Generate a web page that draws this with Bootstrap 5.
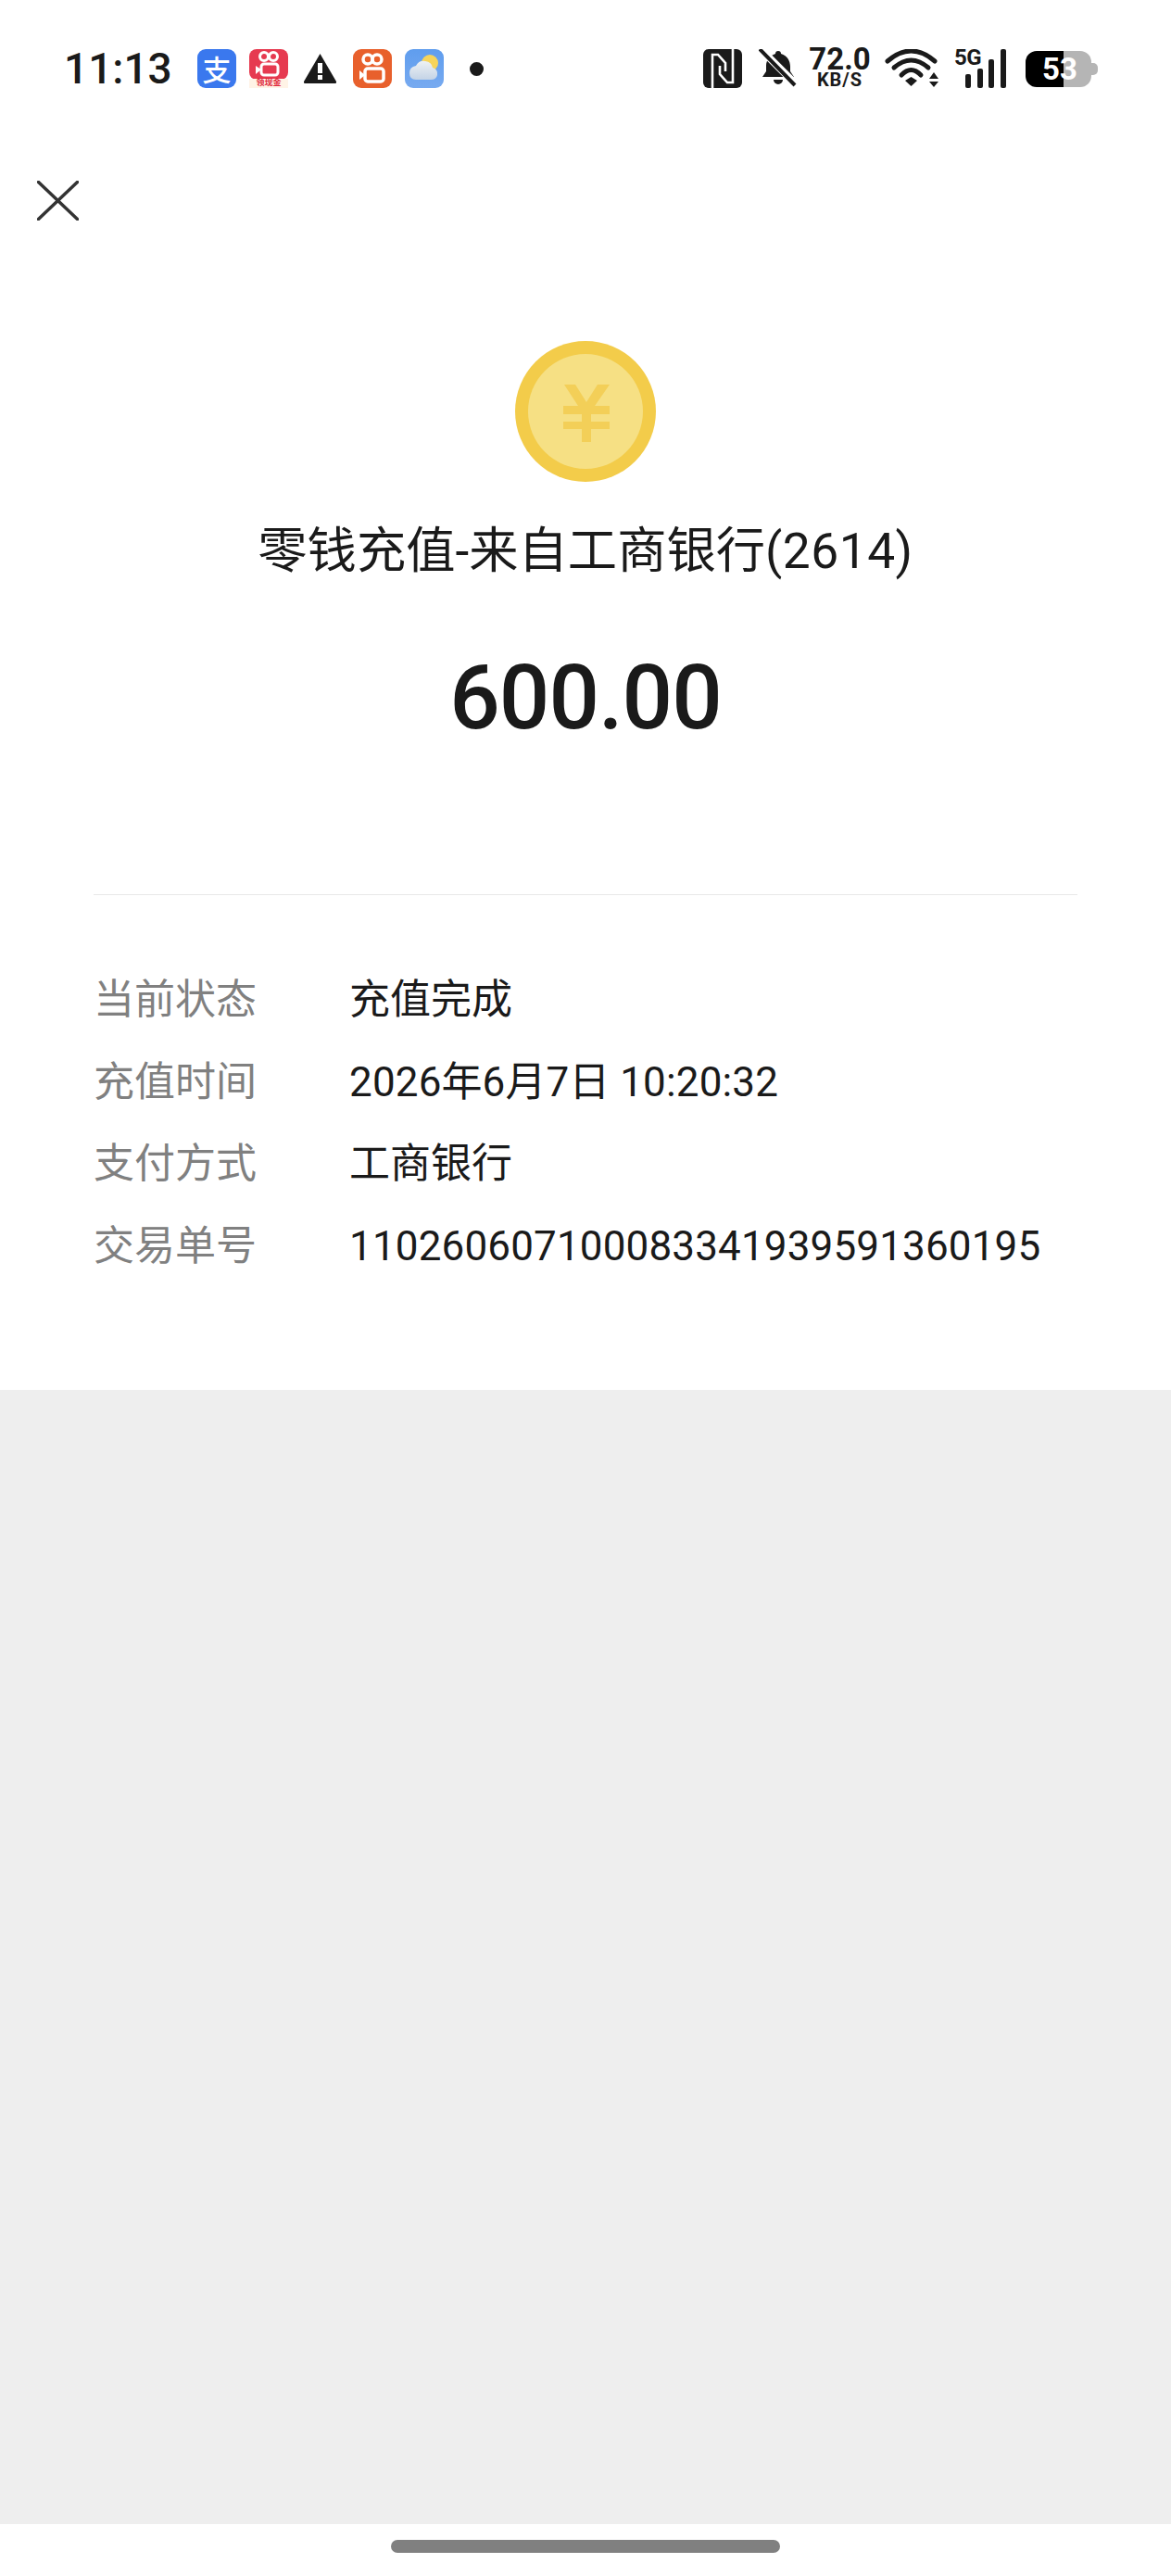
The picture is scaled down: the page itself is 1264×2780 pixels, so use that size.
<!DOCTYPE html>
<html lang="zh-CN">
  <head>
    <meta charset="UTF-8" />
    <meta name="viewport" content="width=device-width, initial-scale=1.0" />
    <title>零钱充值</title>
    <link href="https://cdn.jsdelivr.net/npm/bootstrap@5.3.0/dist/css/bootstrap.min.css" rel="stylesheet" />
    <style>
      body { background: #fff; color: #1a1a1a; font-family: Roboto, "Noto Sans CJK SC", sans-serif; }
      .page { height: 2780px; }
      .status-row { height: 148px; padding: 53px 79px 0 69px; }
      .status-row svg { display: block; flex: none; }
      .clock { width: 113px; margin-right: 31px; margin-top: -3px; font-size: 46px; font-weight: 500; line-height: 48px; white-space: nowrap; }
      .tray { gap: 14px; }
      .tray .warn { margin: 4px 3px 0 2px; }
      .tray .dot-mark { margin: 14px 0 0 14px; width: 15px; height: 15px; background: #1a1a1a; border-radius: 50%; }
      .pay-tile { width: 42px; height: 42px; border-radius: 9px; background: #3a78ee; color: #fff; font-family: "Noto Sans CJK SC", sans-serif; font-size: 31px; font-weight: 500; line-height: 42px; text-align: center; }
      .promo-tile { position: relative; width: 42px; height: 42px; }
      .promo-tag { position: absolute; left: 0; right: 0; bottom: 1px; color: #e0283c; font-family: "Noto Sans CJK SC", sans-serif; font-size: 9px; font-weight: 700; line-height: 10px; text-align: center; white-space: nowrap; }
      .nfc-mark { margin-right: 18px; }
      .speed { width: 67px; margin: -1px 15px 0 12px; text-align: center; font-weight: 700; color: #1a1a1a; }
      .speed-num { font-size: 33px; line-height: 24px; height: 24px; white-space: nowrap; }
      .speed-unit { margin-top: 3px; font-size: 20px; line-height: 15px; letter-spacing: 1px; white-space: nowrap; }
      .signal-box { position: relative; width: 57px; height: 42px; margin-left: 15px; }
      .signal-tag { position: absolute; left: 0; top: 0; font-size: 24px; font-weight: 700; line-height: 18px; letter-spacing: -0.5px; color: #1a1a1a; }
      .batt { width: 78px; height: 39px; margin: 2px 0 0 20px; position: relative; }
      .batt-body { width: 71px; height: 39px; border-radius: 12px; background: linear-gradient(90deg, #000 41px, #b5b5b5 41px); color: #fff; font-size: 33px; font-weight: 700; line-height: 39px; padding-left: 18px; }
      .batt-nub { position: absolute; right: 0; top: 13px; width: 7px; height: 13px; background: #b5b5b5; border-radius: 0 5px 5px 0; }
      .close-row { height: 90px; padding: 47px 0 0 40px; }
      .close-row svg { display: block; }
      .hero { padding-top: 130px; height: 727px; }
      .coin { flex: none; }
      .hero-title { margin: 37px 0 0; height: 76px; font-size: 53.3px; font-weight: 400; line-height: 76px; white-space: nowrap; }
      .hero-title .num { letter-spacing: 0.5px; }
      .hero-amount { margin-top: 65px; font-size: 96px; font-weight: 500; line-height: 110px; letter-spacing: -1px; color: #1a1a1a; }
      .info { margin: 0 101px; padding: 69px 0 111px; border-top: 1px solid #e8e8e8; }
      .info-row { height: 88.6px; font-size: 44px; line-height: 88.6px; white-space: nowrap; }
      .info-key { width: 276px; color: #808080; }
      .info-val .num { letter-spacing: 0.15px; }
      .gray-zone { background: #eee; }
      .gesture-row { height: 56px; padding-top: 17px; }
      .gesture-bar { width: 420px; height: 14px; border-radius: 7px; background: #808080; }
    </style>
  </head>
  <body>
    <div class="page d-flex flex-column">
      <!-- status bar -->
      <div class="status-row d-flex align-items-start bg-white">
        <div class="clock">11:13</div>
        <div class="tray d-flex align-items-start">
          <div class="pay-tile">支</div>
          <div class="promo-tile">
            <svg width="42" height="42" viewBox="0 0 42 42">
              <rect width="42" height="33" rx="8" fill="#e63a50" />
              <rect y="32" width="42" height="10" fill="#fff3e6" />
              <g fill="none" stroke="#fff" stroke-width="3">
                <circle cx="16" cy="8" r="4.5" />
                <circle cx="26" cy="8" r="4.5" />
                <rect x="13" y="16" width="18" height="12" rx="3" />
              </g>
              <path d="M13 22 L7 18 V27 Z" fill="#fff" />
            </svg>
            <span class="promo-tag">领现金</span>
          </div>
          <svg class="warn" width="37" height="33" viewBox="0 0 37 33">
            <path d="M18.5 1 L36 31 Q36.5 33 35 33 L2 33 Q.5 33 1 31 Z" fill="#1a1a1a" />
            <rect x="16" y="11" width="5" height="11" fill="#fff" />
            <rect x="16" y="24" width="5" height="5" fill="#fff" />
          </svg>
          <svg width="42" height="42" viewBox="0 0 42 42">
            <rect width="42" height="42" rx="9" fill="#e8602c" />
            <g fill="none" stroke="#fff" stroke-width="3.5">
              <circle cx="16" cy="11" r="5" />
              <circle cx="26" cy="11" r="5" />
              <rect x="13" y="21" width="20" height="14" rx="3" />
            </g>
            <path d="M13 28 L7 23 V33 Z" fill="#fff" />
          </svg>
          <svg width="42" height="42" viewBox="0 0 42 42">
            <defs>
              <linearGradient id="sky" x1="0" y1="0" x2="0" y2="1">
                <stop offset="0" stop-color="#5f9dee" />
                <stop offset="1" stop-color="#77aaf0" />
              </linearGradient>
              <linearGradient id="cloud" x1="0" y1="0" x2="0" y2="1">
                <stop offset="0" stop-color="#eef2f4" />
                <stop offset="1" stop-color="#c4d3e6" />
              </linearGradient>
            </defs>
            <rect width="42" height="42" rx="9" fill="url(#sky)" />
            <circle cx="27" cy="15" r="9" fill="#f6d45a" />
            <path d="M12 33 Q5 33 5 26 Q5 19 12 18 Q15 12 22 13 Q29 14 30 20 Q36 22 35 28 Q34 33 28 33 Z" fill="url(#cloud)" />
          </svg>
          <div class="dot-mark"></div>
        </div>
        <div class="ms-auto d-flex align-items-start">
          <svg class="nfc-mark" width="42" height="42" viewBox="0 0 42 42">
            <rect width="42" height="42" rx="6" fill="#1a1a1a" />
            <path d="M10 42 V6 H16 L24 15 V24 M32 0 V36 H26 L18 27 V18" fill="none" stroke="#fff" stroke-width="2.6" />
          </svg>
          <svg width="42" height="42" viewBox="0 0 42 42">
            <path d="M21 2 c2 0 3 1 3 3 c7 2 10 8 10 14 v5 l4 6 H4 l4 -6 v-6 c0 -6 4 -11 10 -13 c0 -2 1 -3 3 -3 Z M16 33 h10 a5 5 0 0 1 -10 0 Z" fill="#1a1a1a" />
            <path d="M2 0 L40 38" stroke="#fff" stroke-width="8" />
            <path d="M1 0 L39 39" stroke="#1a1a1a" stroke-width="4" />
          </svg>
          <div class="speed">
            <div class="speed-num">72.0</div>
            <div class="speed-unit">KB/S</div>
          </div>
          <svg width="60" height="42" viewBox="0 0 60 42">
            <g fill="none" stroke="#1a1a1a" stroke-width="5" stroke-linecap="round">
              <path d="M3 13 Q28.5 -9 54 13" />
              <path d="M10 20 Q28.5 4 47 20" />
              <path d="M18 28 Q28.5 17 39 28" />
            </g>
            <path d="M22 34 L28.5 30 L35 34 L28.5 40 Z" fill="#1a1a1a" />
            <path d="M48 32 L53 25 L58 32 Z M48 35 H58 L53 41 Z" fill="#1a1a1a" />
          </svg>
          <div class="signal-box">
            <span class="signal-tag">5G</span>
            <svg width="57" height="42" viewBox="0 0 57 42">
              <rect x="12" y="27" width="6" height="15" rx="2" fill="#1a1a1a" />
              <rect x="25" y="21" width="6" height="21" rx="2" fill="#1a1a1a" />
              <rect x="37" y="11" width="6" height="31" rx="2" fill="#1a1a1a" />
              <rect x="50" y="0" width="6" height="42" rx="2" fill="#1a1a1a" />
            </svg>
          </div>
          <div class="batt">
            <div class="batt-body">53</div>
            <div class="batt-nub"></div>
          </div>
        </div>
      </div>

      <!-- close -->
      <div class="close-row bg-white">
        <svg width="45" height="43" viewBox="0 0 45 43">
          <path d="M1.5 1.5 L43.5 41.5 M43.5 1.5 L1.5 41.5" stroke="#333" stroke-width="3.5" stroke-linecap="round" />
        </svg>
      </div>

      <!-- coin, title, amount -->
      <div class="hero bg-white d-flex flex-column align-items-center text-center">
        <svg class="coin" width="152" height="152" viewBox="0 0 152 152">
          <circle cx="76" cy="76" r="76" fill="#f3cc4a" />
          <circle cx="76" cy="76" r="62" fill="#f6e084" />
          <path d="M53 47 H65 L77 66 L89 47 H102 L86 70 H102 V79 H82 V87 H102 V95 H82 V109 H72 V95 H52 V87 H72 V79 H52 V70 H68 Z" fill="#f3cf58" />
        </svg>
        <h1 class="hero-title">零钱充值-来自工商银行<span class="num">(2614)</span></h1>
        <div class="hero-amount">600.00</div>
      </div>

      <!-- details -->
      <div class="bg-white">
        <div class="info">
          <div class="info-row d-flex"><div class="info-key">当前状态</div><div class="info-val">充值完成</div></div>
          <div class="info-row d-flex"><div class="info-key">充值时间</div><div class="info-val"><span class="num">2026</span>年<span class="num">6</span>月<span class="num">7</span>日 <span class="num">10:20:32</span></div></div>
          <div class="info-row d-flex"><div class="info-key">支付方式</div><div class="info-val">工商银行</div></div>
          <div class="info-row d-flex"><div class="info-key">交易单号</div><div class="info-val"><span class="num">110260607100083341939591360195</span></div></div>
        </div>
      </div>

      <div class="gray-zone flex-grow-1"></div>

      <div class="gesture-row bg-white d-flex justify-content-center">
        <div class="gesture-bar"></div>
      </div>
    </div>
  </body>
</html>
